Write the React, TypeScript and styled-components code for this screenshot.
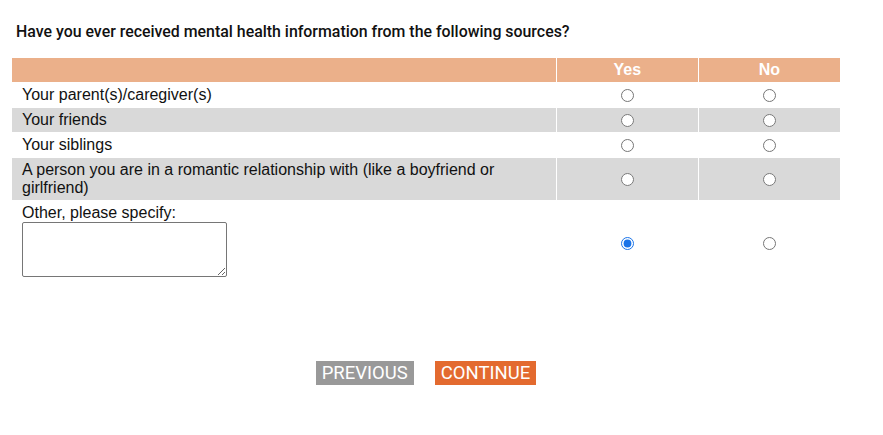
import React, { useState } from 'react';
import styled, { createGlobalStyle } from 'styled-components';

const GlobalStyle = createGlobalStyle`
  body {
    margin: 0;
    background: #fff;
    font-family: "Liberation Sans", Arial, sans-serif;
  }
`;

const sources = [
  'Your parent(s)/caregiver(s)',
  'Your friends',
  'Your siblings',
  'A person you are in a romantic relationship with (like a boyfriend or girlfriend)',
];

export default function App() {
  const [answers, setAnswers] = useState<Record<number, string>>({ 4: 'yes' });

  const pick = (row: number, value: string) => setAnswers({ ...answers, [row]: value });

  return (
    <Page>
      <GlobalStyle />
      <Question>Have you ever received mental health information from the following sources?</Question>
      <Grid>
        <thead>
          <tr>
            <HeadCell />
            <HeadCell>Yes</HeadCell>
            <HeadCell>No</HeadCell>
          </tr>
        </thead>
        <tbody>
          {sources.map((label, i) => (
            <Row key={label} $shaded={i % 2 === 1}>
              <LabelCell>{label}</LabelCell>
              <RadioCell>
                <Radio type="radio" name={`q${i}`} checked={answers[i] === 'yes'} onChange={() => pick(i, 'yes')} />
              </RadioCell>
              <RadioCell>
                <Radio type="radio" name={`q${i}`} checked={answers[i] === 'no'} onChange={() => pick(i, 'no')} />
              </RadioCell>
            </Row>
          ))}
          <Row $shaded={false}>
            <LabelCell>
              <div>Other, please specify:</div>
              <Specify />
            </LabelCell>
            <RadioCell>
              <Radio type="radio" name="q4" checked={answers[4] === 'yes'} onChange={() => pick(4, 'yes')} />
            </RadioCell>
            <RadioCell>
              <Radio type="radio" name="q4" checked={answers[4] === 'no'} onChange={() => pick(4, 'no')} />
            </RadioCell>
          </Row>
        </tbody>
      </Grid>
      <Actions>
        <NavButton $variant="back">PREVIOUS</NavButton>
        <NavButton $variant="next">CONTINUE</NavButton>
      </Actions>
    </Page>
  );
}

const Page = styled.div`
  width: 828px;
  margin-left: 12px;
  padding-top: 22px;
`;

const Question = styled.h2`
  margin: 0 0 17px 4px;
  font-family: Roboto, "Liberation Sans", sans-serif;
  font-weight: 500;
  font-size: 15.9px;
  line-height: 19px;
  color: #111;
`;

const Grid = styled.table`
  width: 100%;
  border-collapse: collapse;
  table-layout: fixed;
`;

const HeadCell = styled.th`
  height: 24px;
  padding: 0;
  background: #ebb08a;
  color: #fff;
  font-size: 16px;
  font-weight: bold;
  text-align: center;
  border-left: 1px solid #fff;

  &:first-child {
    width: 544px;
    border-left: none;
  }
`;

const Row = styled.tr<{ $shaded: boolean }>`
  background: ${(p) => (p.$shaded ? '#d9d9d9' : '#fff')};
  border-top: 1px solid #fff;
`;

const LabelCell = styled.td`
  padding: 3px 10px;
  font-size: 16px;
  line-height: 18px;
  color: #111;
  vertical-align: middle;
`;

const RadioCell = styled.td`
  text-align: center;
  vertical-align: middle;
  border-left: 1px solid #fff;
  padding: 0;
`;

const Radio = styled.input`
  margin: 0;
  vertical-align: middle;
  accent-color: #1a73e8;
`;

const Specify = styled.textarea`
  display: block;
  box-sizing: border-box;
  width: 205px;
  height: 55px;
  margin: 0 0 5px;
  border: 1px solid #767676;
  border-radius: 2px;
`;

const Actions = styled.div`
  display: flex;
  justify-content: center;
  gap: 21px;
  margin-top: 76px;
`;

const NavButton = styled.button<{ $variant: 'back' | 'next' }>`
  height: 24px;
  padding: 0 6px;
  border: none;
  border-radius: 0;
  background: ${(p) => (p.$variant === 'next' ? '#e36a2f' : '#999999')};
  color: #fff;
  font-family: Roboto, "Liberation Sans", sans-serif;
  font-size: 18.5px;
  line-height: 24px;
  cursor: pointer;
`;
